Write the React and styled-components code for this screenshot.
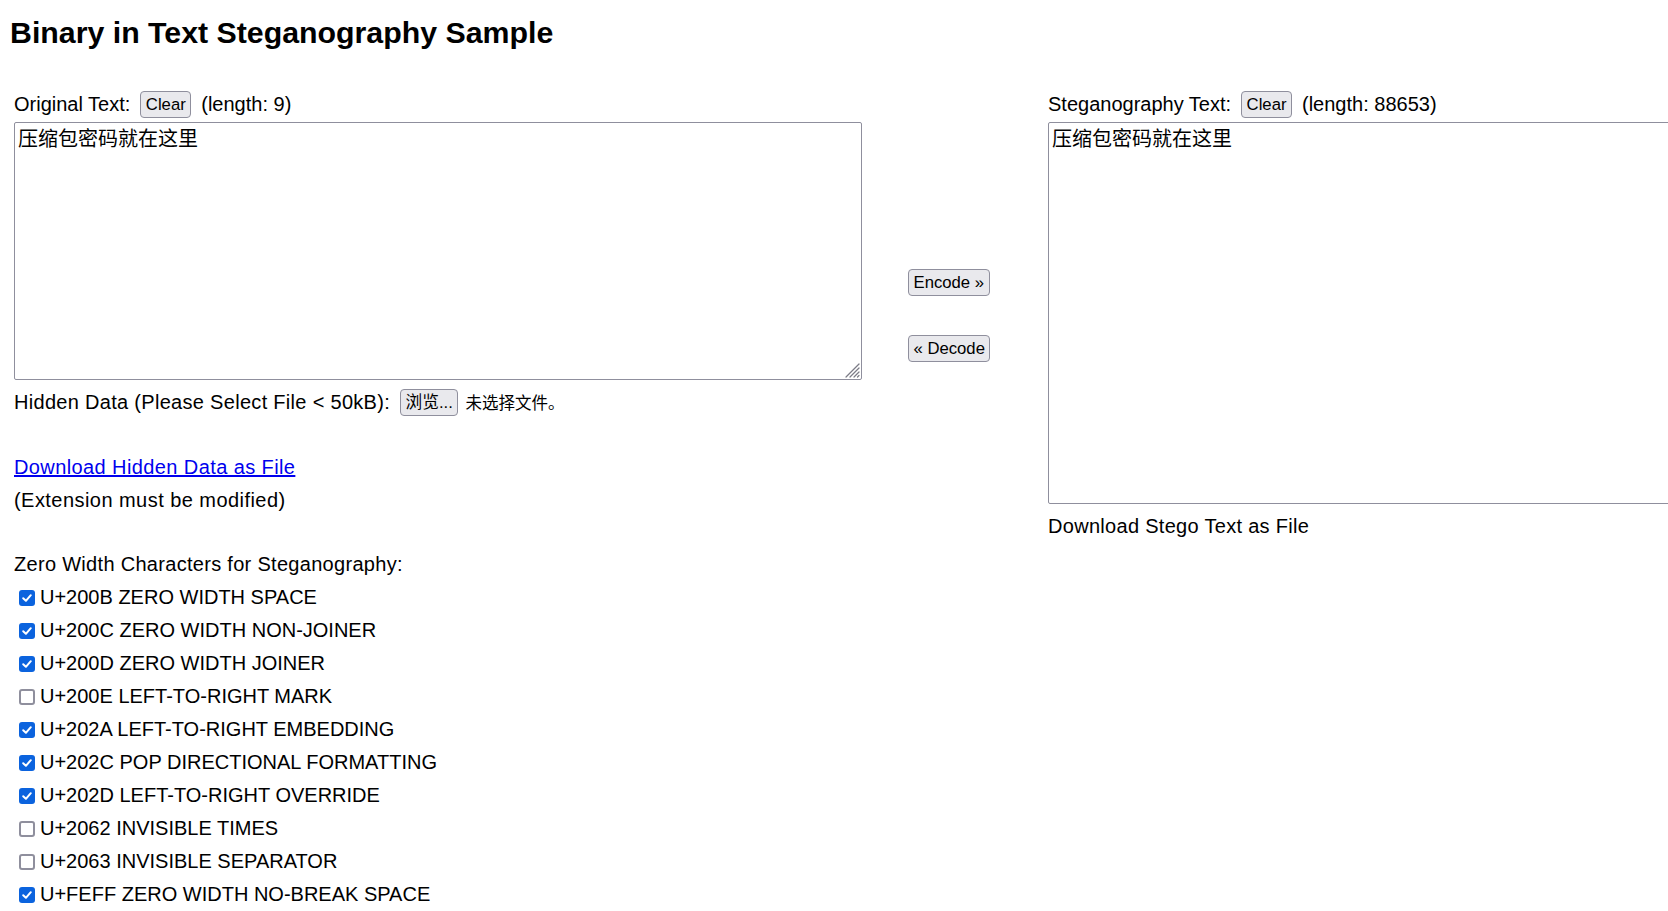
import React from 'react'
import styled, { createGlobalStyle } from 'styled-components'

const GlobalStyle = createGlobalStyle`
    html, body {
        margin: 0;
        padding: 0;
        overflow: hidden;
        background: #ffffff;
    }
    body {
        font-family: "Liberation Sans", Arial, sans-serif;
        font-size: 20px;
        color: #000000;
    }
`

const chars = [
    { code: 'U+200B', name: 'ZERO WIDTH SPACE', on: true },
    { code: 'U+200C', name: 'ZERO WIDTH NON-JOINER', on: true },
    { code: 'U+200D', name: 'ZERO WIDTH JOINER', on: true },
    { code: 'U+200E', name: 'LEFT-TO-RIGHT MARK', on: false },
    { code: 'U+202A', name: 'LEFT-TO-RIGHT EMBEDDING', on: true },
    { code: 'U+202C', name: 'POP DIRECTIONAL FORMATTING', on: true },
    { code: 'U+202D', name: 'LEFT-TO-RIGHT OVERRIDE', on: true },
    { code: 'U+2062', name: 'INVISIBLE TIMES', on: false },
    { code: 'U+2063', name: 'INVISIBLE SEPARATOR', on: false },
    { code: 'U+FEFF', name: 'ZERO WIDTH NO-BREAK SPACE', on: true },
]

function Grip() {
    return (
        <GripMark width="16" height="16" viewBox="0 0 16 16">
            <g stroke="#7c7c86" strokeWidth="1.2" strokeLinecap="round">
                <line x1="15" y1="2" x2="2" y2="15" />
                <line x1="15" y1="6" x2="6" y2="15" />
                <line x1="15" y1="10" x2="10" y2="15" />
                <line x1="15" y1="13.5" x2="13.5" y2="15" />
            </g>
        </GripMark>
    )
}

function Check({ on }) {
    return (
        <Box $on={on}>
            {on && (
                <svg width="12" height="12" viewBox="0 0 12 12">
                    <path d="M2.2 6.2 L4.9 8.8 L9.8 3.2" fill="none" stroke="#ffffff" strokeWidth="2" strokeLinecap="round" strokeLinejoin="round" />
                </svg>
            )}
        </Box>
    )
}

function App() {
    return (
        <>
            <GlobalStyle />
            <Title>Binary in Text Steganography Sample</Title>
            <Main>
                <Column $width={848}>
                    <LabelRow>
                        <span>Original Text:</span>
                        <Button>Clear</Button>
                        <span>(length: 9)</span>
                    </LabelRow>
                    <AreaWrap>
                        <TextArea $height={258} defaultValue="压缩包密码就在这里" />
                        <Grip />
                    </AreaWrap>
                    <LabelRow $top={7} $spread={0.3}>
                        <span>Hidden Data (Please Select File &lt; 50kB):</span>
                        <Button $cjk>浏览...</Button>
                        <FileName>未选择文件。</FileName>
                    </LabelRow>
                    <Line $top={34} $spread={0.4}>
                        <Link href="#">Download Hidden Data as File</Link>
                    </Line>
                    <Line $spread={0.45}>(Extension must be modified)</Line>
                    <Line $top={31} $spread={0.3}>Zero Width Characters for Steganography:</Line>
                    {chars.map((c) => (
                        <CheckRow key={c.code}>
                            <Check on={c.on} />
                            <span>{c.code} {c.name}</span>
                        </CheckRow>
                    ))}
                </Column>
                <Middle>
                    <Button>Encode »</Button>
                    <Button $top={39}>« Decode</Button>
                </Middle>
                <Column $width={848}>
                    <LabelRow>
                        <span>Steganography Text:</span>
                        <Button>Clear</Button>
                        <span>(length: 88653)</span>
                    </LabelRow>
                    <AreaWrap>
                        <TextArea $height={382} defaultValue="压缩包密码就在这里" />
                    </AreaWrap>
                    <Line $top={6} $spread={0.3}>Download Stego Text as File</Line>
                </Column>
            </Main>
        </>
    )
}

export default App

const Title = styled.h1`
    margin: 15px 0 0 10px;
    font-size: 30.3px;
    line-height: 36px;
    font-weight: bold;
`

const Main = styled.div`
    display: flex;
    margin-top: 38px;
    padding-left: 14px;
    width: max-content;
`

const Column = styled.div`
    width: ${(p) => p.$width}px;
    flex-shrink: 0;
    display: flex;
    flex-direction: column;
`

const Middle = styled.div`
    width: 186px;
    flex-shrink: 0;
    display: flex;
    flex-direction: column;
    align-items: flex-start;
    padding: 180px 0 0 46px;
    box-sizing: border-box;
`

const LabelRow = styled.div`
    display: flex;
    align-items: center;
    gap: 10px;
    height: 30px;
    margin-top: ${(p) => p.$top || 0}px;
    white-space: nowrap;
    letter-spacing: ${(p) => p.$spread || 0}px;
`

const Button = styled.button`
    height: 27px;
    padding: 0 4.5px;
    margin-top: ${(p) => p.$top || 0}px;
    box-sizing: border-box;
    background: #e9e9ed;
    border: 1px solid #8f8f9d;
    border-radius: 4px;
    color: #000000;
    font-family: ${(p) => (p.$cjk ? '"Liberation Sans", "Noto Sans CJK SC", sans-serif' : '"Liberation Sans", Arial, sans-serif')};
    font-size: 16.7px;
    letter-spacing: 0;
    line-height: 25px;
    cursor: default;
`

const FileName = styled.span`
    margin-left: -3px;
    font-family: "Noto Sans CJK SC", sans-serif;
    font-size: 16.5px;
    letter-spacing: 0;
`

const AreaWrap = styled.div`
    position: relative;
    margin-top: 3px;
    width: 848px;
`

const TextArea = styled.textarea`
    display: block;
    width: 848px;
    height: ${(p) => p.$height}px;
    box-sizing: border-box;
    margin: 0;
    padding: 2px 3px;
    border: 1px solid #8f8f9d;
    border-radius: 2px;
    background: #ffffff;
    color: #000000;
    font-family: "Noto Sans CJK SC", sans-serif;
    font-size: 20px;
    line-height: 25px;
    resize: none;
    outline: none;
`

const GripMark = styled.svg`
    position: absolute;
    right: 2px;
    bottom: 2px;
`

const Line = styled.div`
    height: 33px;
    line-height: 33px;
    margin-top: ${(p) => p.$top || 0}px;
    white-space: nowrap;
    letter-spacing: ${(p) => p.$spread || 0}px;
`

const Link = styled.a`
    color: #0000ee;
    text-decoration: underline;
`

const CheckRow = styled.div`
    display: flex;
    align-items: center;
    height: 33px;
    white-space: nowrap;
`

const Box = styled.span`
    width: 16px;
    height: 16px;
    margin: 0 5px 0 5px;
    box-sizing: border-box;
    border-radius: 3px;
    display: flex;
    align-items: center;
    justify-content: center;
    background: ${(p) => (p.$on ? '#0b63de' : '#ffffff')};
    border: ${(p) => (p.$on ? 'none' : '2px solid #8f8f9d')};
`
